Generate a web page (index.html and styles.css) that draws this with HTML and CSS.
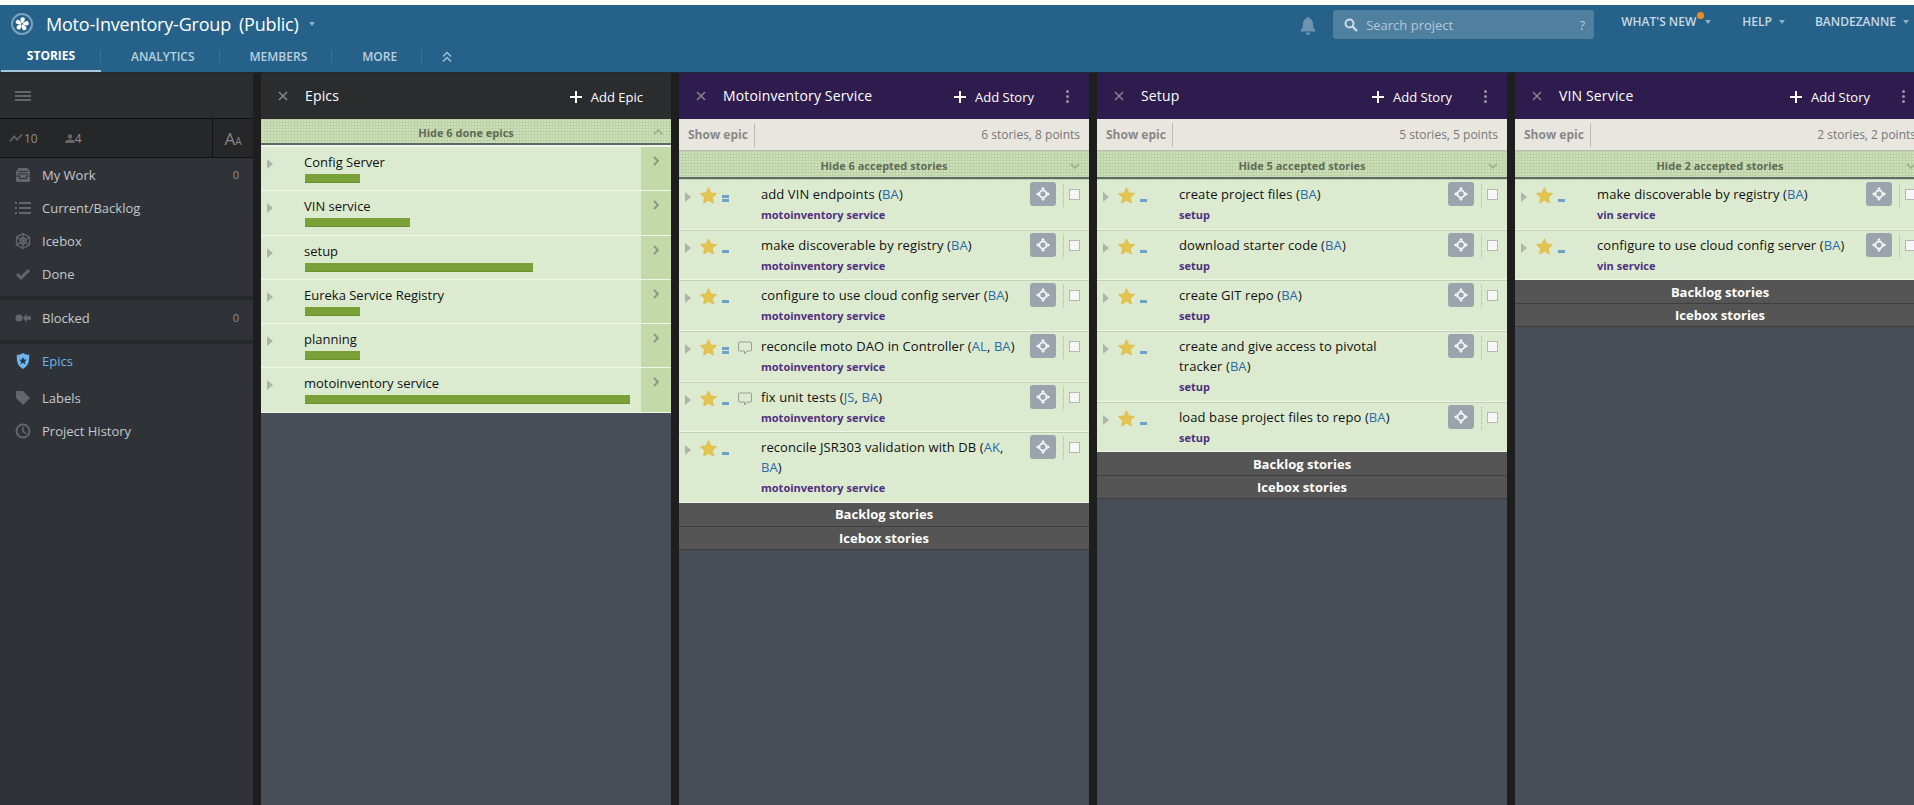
FILE: index.html
```html
<!DOCTYPE html>
<html lang="en">
<head>
<meta charset="utf-8">
<title>Moto-Inventory-Group</title>
<link rel="stylesheet" href="styles.css">
</head>
<body>
<svg class="defs" width="0" height="0" aria-hidden="true">
  <symbol id="i-star" viewBox="0 0 24 24"><path d="M12 1l3.400 7.300 7.900 1-5.800 5.500 1.500 7.900-7-3.900-7 3.900 1.500-7.900L.7 9.300l7.900-1z"/></symbol>
  <symbol id="i-tri" viewBox="0 0 6 10"><path d="M0 0l6 5-6 5z"/></symbol>
  <symbol id="i-x" viewBox="0 0 10 10"><path d="M1 1l8 8M9 1l-8 8" fill="none" stroke="currentColor" stroke-width="1.500"/></symbol>
  <symbol id="i-plus" viewBox="0 0 12 12"><path d="M6 0v12M0 6h12" fill="none" stroke="currentColor" stroke-width="2"/></symbol>
  <symbol id="i-comment" viewBox="0 0 14 14"><path d="M1.500 1h11a1 1 0 0 1 1 1v7a1 1 0 0 1-1 1H9l-2.500 3V10h-5a1 1 0 0 1-1-1V2a1 1 0 0 1 1-1z" fill="none" stroke="currentColor" stroke-width="1"/></symbol>
  <symbol id="i-move" viewBox="0 0 14 14"><path d="M7 0l2.200 2.600H4.800zM7 14l-2.200-2.600h4.400zM0 7l2.600-2.200v4.400zM14 7l-2.600 2.200V4.800z" fill="#fff"/><circle cx="7" cy="7" r="3.500" fill="none" stroke="#fff" stroke-width="1.600"/></symbol>
  <symbol id="i-chev" viewBox="0 0 6 10"><path d="M1 1l4 4-4 4" fill="none" stroke="currentColor" stroke-width="1.800"/></symbol>
  <symbol id="i-down" viewBox="0 0 10 6"><path d="M1 1l4 4 4-4" fill="none" stroke="currentColor" stroke-width="1.800"/></symbol>
</svg>

<header class="topbar">
  <div class="topbar-main">
    <div class="brand">
      <svg class="logo" viewBox="0 0 22 22"><circle cx="11" cy="11" r="10" fill="#26618a" stroke="#7ba3bd" stroke-width="2"/><g fill="#fff"><path d="M11.300 10.500C9.800 8.800 9 6.800 9.800 5c1.100-1 2.800-.9 3.800.1.700 1.900-.4 3.900-2.300 5.400z"/><path d="M11.300 10.500C9.800 8.800 9 6.800 9.800 5c1.100-1 2.800-.9 3.800.1.700 1.900-.4 3.900-2.300 5.400z" transform="rotate(72 11 11)"/><path d="M11.300 10.500C9.800 8.800 9 6.800 9.800 5c1.100-1 2.800-.9 3.800.1.700 1.900-.4 3.900-2.300 5.400z" transform="rotate(144 11 11)"/><path d="M11.300 10.500C9.800 8.800 9 6.800 9.800 5c1.100-1 2.800-.9 3.800.1.700 1.900-.4 3.900-2.300 5.400z" transform="rotate(216 11 11)"/><path d="M11.300 10.500C9.800 8.800 9 6.800 9.800 5c1.100-1 2.800-.9 3.800.1.700 1.900-.4 3.900-2.300 5.400z" transform="rotate(288 11 11)"/></g></svg>
      <span class="brand-name">Moto-Inventory-Group</span>
      <span class="brand-vis">(Public)</span>
      <span class="caret"></span>
    </div>
    <div class="tools">
      <svg class="bell" viewBox="0 0 16 18"><path d="M8 0a1.500 1.500 0 0 1 1.500 1.600C12 2.300 13 4.500 13 7c0 3.500 1 5 2.500 6.500v1H.5v-1C2 12 3 10.500 3 7c0-2.500 1-4.700 3.500-5.400A1.500 1.500 0 0 1 8 0zM6 15.500h4A2 2 0 0 1 8 18a2 2 0 0 1-2-2.500z" fill="#6d93ae"/></svg>
      <div class="search">
        <svg class="search-icon" viewBox="0 0 14 14"><circle cx="5.500" cy="5.500" r="4" fill="none" stroke="#cfdde7" stroke-width="2"/><path d="M8.500 8.500l4.500 4.500" stroke="#cfdde7" stroke-width="2.400"/></svg>
        <span class="search-text">Search project</span>
        <span class="search-help">?</span>
      </div>
      <nav class="usernav">
        <span class="usernav-item whatsnew">WHAT'S NEW<i class="dot"></i><span class="caret"></span></span>
        <span class="usernav-item help">HELP<span class="caret"></span></span>
        <span class="usernav-item">BANDEZANNE<span class="caret"></span></span>
      </nav>
    </div>
  </div>
  <nav class="tabs">
    <span class="tab active">STORIES</span>
    <span class="tab">ANALYTICS</span>
    <span class="tab">MEMBERS</span>
    <span class="tab">MORE</span>
    <span class="tab tab-collapse"><svg class="collapse-icon" viewBox="0 0 10 12"><path d="M1 5.500l4-4 4 4M1 10.500l4-4 4 4" fill="none" stroke="#a9c6da" stroke-width="1.300"/></svg></span>
  </nav>
</header>

<main class="workspace">
  <aside class="sidebar">
    <div class="side-top"><span class="burger"><i></i><i></i><i></i></span></div>
    <div class="side-stats">
      <div class="stats">
        <svg class="stat-velocity" viewBox="0 0 16 10"><path d="M1 9l5-6 3 4 6-6" fill="none" stroke="#666" stroke-width="1.700"/></svg><span class="stat-num">10</span>
        <svg class="stat-user" viewBox="0 0 10 9"><circle cx="5" cy="2.500" r="2.300" fill="#666"/><path d="M0 9c0-2.500 2-3.500 5-3.500s5 1 5 3.500z" fill="#666"/></svg><span>4</span>
      </div>
      <div class="textsize"><span class="big-a">A</span><span class="small-a">A</span></div>
    </div>
    <ul class="side-menu first">
      <li class="side-item"><svg class="side-icon" viewBox="0 0 16 16"><path d="M3.500 1h9L15 5v8.500a1.500 1.500 0 0 1-1.500 1.500h-11A1.500 1.500 0 0 1 1 13.500V5z" fill="#63676b"/><path d="M3.500 4.500h9M3 7h10" stroke="#2f3338"/><path d="M1 9h3.500v2.500h7V9H15" fill="none" stroke="#2f3338"/></svg><span class="side-label">My Work</span><span class="side-count">0</span></li>
      <li class="side-item"><svg class="side-icon" viewBox="0 0 16 16"><path d="M4 3h12M4 8h12M4 13h12" stroke="#63676b" stroke-width="2"/><path d="M0 3h2M0 8h2M0 13h2" stroke="#63676b" stroke-width="2"/></svg><span class="side-label">Current/Backlog</span></li>
      <li class="side-item"><svg class="side-icon" viewBox="0 0 16 16"><g stroke="#63676b" stroke-width="1.300" fill="none"><path d="M8 .5l6.500 3.750v7.500L8 15.500l-6.500-3.750v-7.500z"/><path d="M8 .5v15M1.500 4.250l13 7.500M14.500 4.250l-13 7.500"/><circle cx="8" cy="8" r="3"/></g></svg><span class="side-label">Icebox</span></li>
      <li class="side-item"><svg class="side-icon" viewBox="0 0 16 16"><path d="M2 8l4 4 8-8" fill="none" stroke="#63676b" stroke-width="3"/></svg><span class="side-label">Done</span></li>
    </ul>
    <ul class="side-menu sep">
      <li class="side-item tall"><svg class="side-icon" viewBox="0 0 18 12"><circle cx="4.500" cy="6" r="4" fill="#63676b"/><path d="M9 6l4-5v3h5v4h-5v3z" fill="#63676b"/></svg><span class="side-label">Blocked</span><span class="side-count">0</span></li>
    </ul>
    <ul class="side-menu sep">
      <li class="side-item epics"><svg class="side-icon" viewBox="0 0 16 18"><path d="M8 0c2 1.500 4 2 7 2 0 7 0 12-7 16C1 14 1 9 1 2c3 0 5-.5 7-2z" fill="#6db3ee"/><path d="M8 4.500l1.300 2.800 3 .3-2.300 2 .7 3L8 11l-2.700 1.600.7-3-2.300-2 3-.3z" fill="#23374a"/></svg><span class="side-label">Epics</span></li>
      <li class="side-item labels"><svg class="side-icon" viewBox="0 0 16 16"><path d="M1 1h7l7 7-7 7-7-7z" fill="#63676b"/></svg><span class="side-label">Labels</span></li>
      <li class="side-item"><svg class="side-icon" viewBox="0 0 16 16"><circle cx="8" cy="8" r="6.500" fill="none" stroke="#63676b" stroke-width="2"/><path d="M8 4v4.500l3 2" fill="none" stroke="#63676b" stroke-width="1.600"/></svg><span class="side-label">Project History</span></li>
    </ul>
  </aside>

  <div class="board">
    <section class="panel">
      <header class="panel-head dark">
        <svg class="close"><use href="#i-x"/></svg>
        <h2 class="panel-title">Epics</h2>
        <span class="add"><svg class="plus"><use href="#i-plus"/></svg>Add Epic</span>
      </header>
      <div class="hide-row epics-hide">Hide 6 done epics<svg class="hide-chev up"><use href="#i-down"/></svg></div>
      <div class="epic"><svg class="tri"><use href="#i-tri"/></svg><div class="epic-body"><div class="epic-name">Config Server</div><div class="epic-bar" style="width:55px"></div></div><span class="epic-side"><svg class="chev"><use href="#i-chev"/></svg></span></div>
      <div class="epic"><svg class="tri"><use href="#i-tri"/></svg><div class="epic-body"><div class="epic-name">VIN service</div><div class="epic-bar" style="width:105px"></div></div><span class="epic-side"><svg class="chev"><use href="#i-chev"/></svg></span></div>
      <div class="epic"><svg class="tri"><use href="#i-tri"/></svg><div class="epic-body"><div class="epic-name">setup</div><div class="epic-bar" style="width:228px"></div></div><span class="epic-side"><svg class="chev"><use href="#i-chev"/></svg></span></div>
      <div class="epic"><svg class="tri"><use href="#i-tri"/></svg><div class="epic-body"><div class="epic-name">Eureka Service Registry</div><div class="epic-bar" style="width:55px"></div></div><span class="epic-side"><svg class="chev"><use href="#i-chev"/></svg></span></div>
      <div class="epic"><svg class="tri"><use href="#i-tri"/></svg><div class="epic-body"><div class="epic-name">planning</div><div class="epic-bar" style="width:55px"></div></div><span class="epic-side"><svg class="chev"><use href="#i-chev"/></svg></span></div>
      <div class="epic"><svg class="tri"><use href="#i-tri"/></svg><div class="epic-body"><div class="epic-name">motoinventory service</div><div class="epic-bar" style="width:325px"></div></div><span class="epic-side"><svg class="chev"><use href="#i-chev"/></svg></span></div>
    </section>

    <section class="panel">
      <header class="panel-head purple">
        <svg class="close"><use href="#i-x"/></svg>
        <h2 class="panel-title">Motoinventory Service</h2>
        <span class="add"><svg class="plus"><use href="#i-plus"/></svg>Add Story</span>
        <span class="kebab"><i></i><i></i><i></i></span>
      </header>
      <div class="filter"><span class="show-epic">Show epic</span><span class="tally">6 stories, 8 points</span></div>
      <div class="hide-row">Hide 6 accepted stories<svg class="hide-chev"><use href="#i-down"/></svg></div>
      <article class="story"><svg class="tri"><use href="#i-tri"/></svg><svg class="star"><use href="#i-star"/></svg><span class="pts"><i></i><i></i></span><span class="note"></span><div class="story-body"><p class="story-name">add VIN endpoints (<a>BA</a>)</p><p class="story-epic">motoinventory service</p></div><span class="move"><svg class="move-icon"><use href="#i-move"/></svg></span><span class="check"></span></article>
      <article class="story"><svg class="tri"><use href="#i-tri"/></svg><svg class="star"><use href="#i-star"/></svg><span class="pts"><i></i></span><span class="note"></span><div class="story-body"><p class="story-name">make discoverable by registry (<a>BA</a>)</p><p class="story-epic">motoinventory service</p></div><span class="move"><svg class="move-icon"><use href="#i-move"/></svg></span><span class="check"></span></article>
      <article class="story"><svg class="tri"><use href="#i-tri"/></svg><svg class="star"><use href="#i-star"/></svg><span class="pts"><i></i></span><span class="note"></span><div class="story-body"><p class="story-name">configure to use cloud config server (<a>BA</a>)</p><p class="story-epic">motoinventory service</p></div><span class="move"><svg class="move-icon"><use href="#i-move"/></svg></span><span class="check"></span></article>
      <article class="story"><svg class="tri"><use href="#i-tri"/></svg><svg class="star"><use href="#i-star"/></svg><span class="pts"><i></i><i></i></span><span class="note"><svg class="comment"><use href="#i-comment"/></svg></span><div class="story-body"><p class="story-name">reconcile moto DAO in Controller (<a>AL</a>, <a>BA</a>)</p><p class="story-epic">motoinventory service</p></div><span class="move"><svg class="move-icon"><use href="#i-move"/></svg></span><span class="check"></span></article>
      <article class="story"><svg class="tri"><use href="#i-tri"/></svg><svg class="star"><use href="#i-star"/></svg><span class="pts"><i></i></span><span class="note"><svg class="comment"><use href="#i-comment"/></svg></span><div class="story-body"><p class="story-name">fix unit tests (<a>JS</a>, <a>BA</a>)</p><p class="story-epic">motoinventory service</p></div><span class="move"><svg class="move-icon"><use href="#i-move"/></svg></span><span class="check"></span></article>
      <article class="story"><svg class="tri"><use href="#i-tri"/></svg><svg class="star"><use href="#i-star"/></svg><span class="pts"><i></i></span><span class="note"></span><div class="story-body"><p class="story-name">reconcile JSR303 validation with DB (<a>AK</a>, <a>BA</a>)</p><p class="story-epic">motoinventory service</p></div><span class="move"><svg class="move-icon"><use href="#i-move"/></svg></span><span class="check"></span></article>
      <div class="group">Backlog stories</div>
      <div class="group">Icebox stories</div>
    </section>

    <section class="panel">
      <header class="panel-head purple">
        <svg class="close"><use href="#i-x"/></svg>
        <h2 class="panel-title">Setup</h2>
        <span class="add"><svg class="plus"><use href="#i-plus"/></svg>Add Story</span>
        <span class="kebab"><i></i><i></i><i></i></span>
      </header>
      <div class="filter"><span class="show-epic">Show epic</span><span class="tally">5 stories, 5 points</span></div>
      <div class="hide-row">Hide 5 accepted stories<svg class="hide-chev"><use href="#i-down"/></svg></div>
      <article class="story"><svg class="tri"><use href="#i-tri"/></svg><svg class="star"><use href="#i-star"/></svg><span class="pts"><i></i></span><span class="note"></span><div class="story-body"><p class="story-name">create project files (<a>BA</a>)</p><p class="story-epic">setup</p></div><span class="move"><svg class="move-icon"><use href="#i-move"/></svg></span><span class="check"></span></article>
      <article class="story"><svg class="tri"><use href="#i-tri"/></svg><svg class="star"><use href="#i-star"/></svg><span class="pts"><i></i></span><span class="note"></span><div class="story-body"><p class="story-name">download starter code (<a>BA</a>)</p><p class="story-epic">setup</p></div><span class="move"><svg class="move-icon"><use href="#i-move"/></svg></span><span class="check"></span></article>
      <article class="story"><svg class="tri"><use href="#i-tri"/></svg><svg class="star"><use href="#i-star"/></svg><span class="pts"><i></i></span><span class="note"></span><div class="story-body"><p class="story-name">create GIT repo (<a>BA</a>)</p><p class="story-epic">setup</p></div><span class="move"><svg class="move-icon"><use href="#i-move"/></svg></span><span class="check"></span></article>
      <article class="story"><svg class="tri"><use href="#i-tri"/></svg><svg class="star"><use href="#i-star"/></svg><span class="pts"><i></i></span><span class="note"></span><div class="story-body"><p class="story-name">create and give access to pivotal tracker&nbsp;(<a>BA</a>)</p><p class="story-epic">setup</p></div><span class="move"><svg class="move-icon"><use href="#i-move"/></svg></span><span class="check"></span></article>
      <article class="story"><svg class="tri"><use href="#i-tri"/></svg><svg class="star"><use href="#i-star"/></svg><span class="pts"><i></i></span><span class="note"></span><div class="story-body"><p class="story-name">load base project files to repo (<a>BA</a>)</p><p class="story-epic">setup</p></div><span class="move"><svg class="move-icon"><use href="#i-move"/></svg></span><span class="check"></span></article>
      <div class="group">Backlog stories</div>
      <div class="group">Icebox stories</div>
    </section>

    <section class="panel">
      <header class="panel-head purple">
        <svg class="close"><use href="#i-x"/></svg>
        <h2 class="panel-title">VIN Service</h2>
        <span class="add"><svg class="plus"><use href="#i-plus"/></svg>Add Story</span>
        <span class="kebab"><i></i><i></i><i></i></span>
      </header>
      <div class="filter"><span class="show-epic">Show epic</span><span class="tally">2 stories, 2 points</span></div>
      <div class="hide-row">Hide 2 accepted stories<svg class="hide-chev"><use href="#i-down"/></svg></div>
      <article class="story"><svg class="tri"><use href="#i-tri"/></svg><svg class="star"><use href="#i-star"/></svg><span class="pts"><i></i></span><span class="note"></span><div class="story-body"><p class="story-name">make discoverable by registry (<a>BA</a>)</p><p class="story-epic">vin service</p></div><span class="move"><svg class="move-icon"><use href="#i-move"/></svg></span><span class="check"></span></article>
      <article class="story"><svg class="tri"><use href="#i-tri"/></svg><svg class="star"><use href="#i-star"/></svg><span class="pts"><i></i></span><span class="note"></span><div class="story-body"><p class="story-name">configure to use cloud config server (<a>BA</a>)</p><p class="story-epic">vin service</p></div><span class="move"><svg class="move-icon"><use href="#i-move"/></svg></span><span class="check"></span></article>
      <div class="group">Backlog stories</div>
      <div class="group">Icebox stories</div>
    </section>
  </div>
</main>
</body>
</html>
```
FILE: styles.css
```css
* { box-sizing: border-box; }
html, body { height: 100%; }
body {
  margin: 0;
  padding-top: 5px;
  background: #fff;
  font-family: "Open Sans", "Liberation Sans", sans-serif;
  font-size: 13px;
  color: #111;
  overflow: hidden;
  display: flex;
  flex-direction: column;
}
.defs { position: absolute; }
p, h2, ul { margin: 0; padding: 0; }
ul { list-style: none; }

/* top bar */
.topbar { height: 68px; flex: none; background: #26618a; border-bottom: 1px solid #1d2a33; display: flex; flex-direction: column; }
.topbar-main { height: 33px; display: flex; justify-content: space-between; }
.brand { display: flex; align-items: center; padding: 5px 0 0 11px; color: #fff; }
.logo { width: 22px; height: 22px; margin-right: 13px; }
.brand-name { font-size: 18px; letter-spacing: -.2px; }
.brand-vis { font-size: 18px; margin-left: 8px; letter-spacing: -.2px; }
.caret { display: inline-block; border: 3px solid transparent; border-top: 4px solid #8fb0c7; border-bottom: 0; margin-left: 10px; vertical-align: middle; }
.tools { display: flex; align-items: flex-start; }
.bell { width: 16px; height: 18px; margin: 12px 17px 0 0; }
.search { width: 261px; height: 29px; margin-top: 5px; background: #50809f; border-radius: 3px; display: flex; align-items: center; padding: 0 9px 0 11px; color: #b2c9d8; font-size: 13px; }
.search-icon { width: 14px; height: 14px; margin-right: 8px; }
.search-text { flex: 1; }
.usernav { display: flex; margin-left: 27px; padding-right: 5px; height: 29px; margin-top: 2px; }
.usernav-item { color: #c6d9e6; font-size: 12px; font-weight: 600; margin-right: 30px; position: relative; display: flex; align-items: center; }
.usernav-item:last-child { margin-right: 0; }
.usernav-item .caret { margin-left: 7px; }
.whatsnew { margin-right: 31px; }
.usernav-item.whatsnew .caret { margin-left: 9px; }
.dot { position: absolute; right: 7px; top: 5px; width: 7px; height: 7px; border-radius: 50%; background: #f08a24; }
.tabs { display: flex; flex: 1; padding-left: 1px; }
.tab { height: 34px; padding: 3px 25px 0 30px; color: #b9d0df; font-size: 12px; font-weight: 600; display: flex; align-items: center; position: relative; }
.tab::after { content: ""; position: absolute; right: 0; top: 12px; height: 13px; border-right: 1px solid #3a7299; }
.tab.active { width: 100px; padding: 3px 0 0; justify-content: center; color: #fff; font-weight: 700; border-bottom: 2px solid #a9c6da; }
.tab-collapse { padding-left: 20px; }
.tab-collapse::after { display: none; }
.collapse-icon { width: 10px; height: 12px; }

/* workspace */
.workspace { flex: 1; min-height: 0; display: flex; background: #1e1e1e; }
.sidebar { width: 253px; flex: none; background: #2f3338; margin-right: 8px; color: #c4c8cb; }
.side-top { height: 46px; background: #2b2c2e; border-bottom: 1px solid #111; display: flex; align-items: center; padding-left: 15px; }
.burger { width: 16px; display: flex; flex-direction: column; gap: 2px; }
.burger i { height: 2px; background: #666; }
.side-stats { height: 39px; background: #262729; border-bottom: 1px solid #111; display: flex; font-size: 12px; color: #8b8f92; }
.stats { flex: 1; display: flex; align-items: center; padding-left: 9px; }
.stat-velocity { width: 14px; height: 10px; margin-right: 1px; }
.stat-num { margin-right: 27px; }
.stat-user { width: 10px; height: 9px; }
.textsize { width: 41px; border-left: 1px solid #111; display: flex; align-items: baseline; justify-content: center; padding-top: 8px; color: #888; }
.big-a { font-size: 17px; }
.small-a { font-size: 10px; }
.side-menu.sep { border-top: 4px solid #26282b; }
.side-item { height: 33px; display: flex; align-items: center; padding: 0 14px 0 15px; }
.side-item.tall { height: 40px; padding-bottom: 5px; }
.side-item.epics { height: 35px; padding-bottom: 1px; color: #6db3ee; }
.side-item.labels { margin-top: 2px; }
.side-icon { width: 16px; height: 16px; margin-right: 11px; flex: none; }
.side-label { flex: 1; }
.side-count { font-size: 11px; color: #8b8f92; }
.side-menu.first { padding-bottom: 6px; }

/* board */
.board { flex: 1; min-width: 0; display: flex; gap: 8px; overflow: hidden; }
.panel { width: 410px; flex: none; background: #474e57; }
.panel-head { height: 46px; display: flex; align-items: center; color: #fff; padding: 0 0 0 17px; }
.panel-head.dark { background: #2b2c2e; }
.panel-head.purple { background: #2f1c4e; }
.close { width: 10px; height: 10px; color: #88858f; margin-right: 17px; flex: none; }
.panel-title { flex: 1; font-size: 14px; font-weight: 400; letter-spacing: .15px; padding-bottom: 2px; }
.add { display: flex; align-items: center; font-size: 13px; margin-right: 32px; padding-top: 1px; }
.panel-head.dark .add { margin-right: 28px; }
.plus { width: 12px; height: 12px; margin-right: 9px; color: #fff; }
.kebab { width: 4px; margin-right: 19px; display: flex; flex-direction: column; gap: 2px; }
.kebab i { height: 3px; width: 3px; border-radius: 50%; background: #9a94a4; }
.filter { height: 32px; background: #e8e6df; border-bottom: 1px solid #bbb; display: flex; align-items: center; justify-content: space-between; padding: 0 9px; font-size: 12px; color: #777; }
.show-epic { font-weight: 700; color: #888; height: 100%; display: flex; align-items: center; }
.show-epic::after { content: ""; height: 24px; border-right: 1px solid #bdbbb5; margin-left: 6px; }
.hide-row {
  height: 28px; padding-top: 2px; display: flex; align-items: center; justify-content: center; position: relative;
  font-size: 11px; font-weight: 700; color: #5f6a57; border-bottom: 2px solid #5c6a66;
  background-color: #cde0ba;
  background-image: linear-gradient(#bcd2a6 1px, transparent 1px), linear-gradient(90deg, #bcd2a6 1px, transparent 1px);
  background-size: 3px 3px;
}
.epics-hide { height: 26px; margin-bottom: 2px; box-shadow: 0 2px 0 #eef5e8; }
.hide-chev { position: absolute; right: 9px; top: 12px; width: 10px; height: 6px; color: #9db58c; }
.hide-chev.up { transform: rotate(180deg); top: 10px; right: 8px; }

.epic { height: 44.3px; background: #dcebd0; border-bottom: 1px solid #f0f6ea; display: flex; position: relative; }
.epic .tri { margin: 12px 0 0 6px; }
.tri { width: 6px; height: 10px; flex: none; fill: #b0b3ad; }
.epic-body { flex: 1; padding: 5px 0 0 31px; }
.epic-name { font-size: 13px; line-height: 20px; }
.epic-bar { height: 9px; margin: 2px 0 0 1px; background: #7aa138; border-bottom: 1px solid #6c9030; }
.epic-side { width: 30px; background: #c4d9a8; color: #8c9484; flex: none; padding: 9px 0 0 12px; }
.chev { display: block; width: 6px; height: 10px; }

.story { background: #dcebd0; border-top: 1px solid #bfd0b3; border-bottom: 1px solid #eef5e8; display: flex; position: relative; padding: 4px 0 3.7px 6px; }
.story .tri { margin-top: 8px; }
.star { width: 17px; height: 17px; fill: #e4c44f; stroke: #d9b842; margin: 3px 0 0 9px; flex: none; }
.pts { width: 7px; height: 18px; margin-left: 5px; display: flex; flex-direction: column; justify-content: flex-end; gap: 1px; flex: none; }
.pts i { height: 3px; background: #6fa0c7; }
.note { width: 32px; flex: none; padding: 5px 0 0 9px; }
.comment { display: block; width: 14px; height: 14px; color: #9a9f96; }
.story-body { width: 257px; flex: none; }
.story-name { font-size: 13px; line-height: 20px; letter-spacing: .09px; }
.story-name a { color: #2a6aa8; }
.story-epic { font-size: 11px; font-weight: 700; line-height: 20px; margin-top: 1px; color: #4f2f80; }
.move { position: absolute; left: 351px; top: 2px; width: 26px; height: 24px; border-radius: 3px; background: #9ba3ad; display: flex; align-items: center; justify-content: center; }
.move-icon { width: 14px; height: 14px; }
.check { position: absolute; left: 390px; top: 9px; width: 11px; height: 11px; background: #f6f6f6; border: 1px solid #b5b9b0; }
.move::after { content: ""; position: absolute; left: 33px; top: 2px; height: 23px; border-left: 1px dotted #a9b3a2; }
.group { height: 23.4px; background: #555; border-bottom: 1px solid #3e3e3e; color: #fff; font-size: 13px; font-weight: 700; display: flex; align-items: center; justify-content: center; }
```
